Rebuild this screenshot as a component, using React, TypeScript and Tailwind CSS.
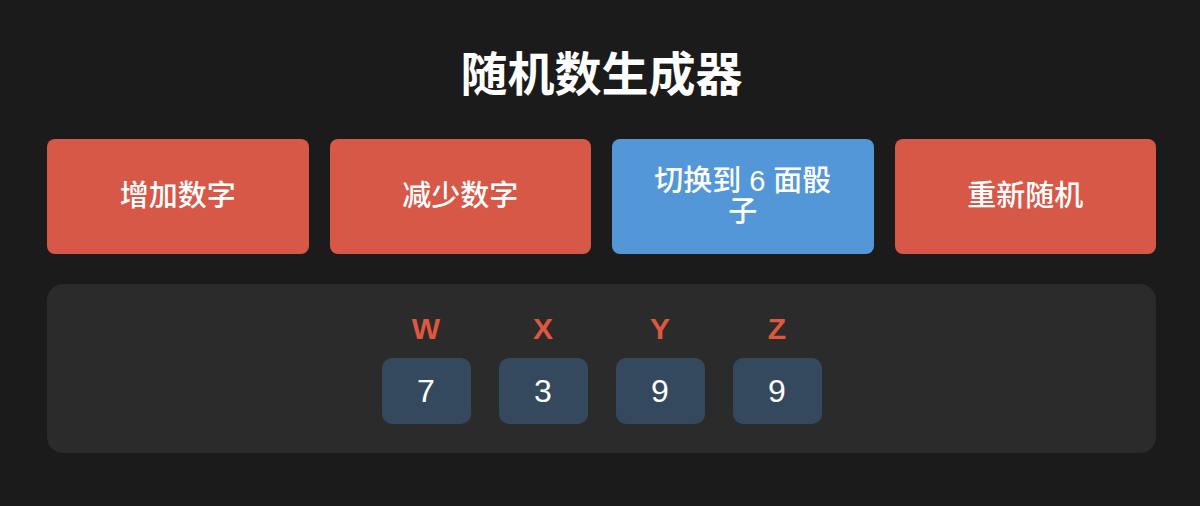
import React, { useState } from "react";

type Mode = 6 | 10;

const LETTERS = ["W", "X", "Y", "Z"];

const rollDigit = (mode: Mode) => Math.floor(Math.random() * mode) + (mode === 6 ? 1 : 0);

const App: React.FC = () => {
  const [mode, setMode] = useState<Mode>(10);
  const [values, setValues] = useState<number[]>([7, 3, 9, 9]);

  const clamp = (n: number) => Math.max(0, Math.min(9, n));

  const increase = () => setValues((v) => v.map((n) => clamp(n + 1)));
  const decrease = () => setValues((v) => v.map((n) => clamp(n - 1)));
  const reroll = () => setValues((v) => v.map(() => rollDigit(mode)));
  const toggleDice = () => setMode((m) => (m === 6 ? 10 : 6));

  const buttons = [
    { label: "增加数字", onClick: increase, color: "bg-[#d85848]" },
    { label: "减少数字", onClick: decrease, color: "bg-[#d85848]" },
    { label: "切换到 6 面骰子", onClick: toggleDice, color: "bg-[#5397d8]" },
    { label: "重新随机", onClick: reroll, color: "bg-[#d85848]" },
  ];

  return (
    <div
      className="min-h-screen bg-[#1b1b1b] pt-[47px] pr-[44px] pb-[53px] pl-[47px] text-white"
      style={{ fontFamily: '"Liberation Sans", "Noto Sans CJK SC", sans-serif' }}
    >
      <h1 className="mb-[36px] text-center text-[47px] leading-[56px] font-bold">
        随机数生成器
      </h1>

      <div className="grid grid-cols-4 gap-[21px]">
        {buttons.map((b) => (
          <button
            key={b.label}
            onClick={b.onClick}
            className={`${b.color} flex h-[115px] items-center justify-center rounded-lg px-[30px] text-center text-[29px] leading-[31px] font-medium text-white`}
          >
            {b.label}
          </button>
        ))}
      </div>

      <div className="mt-[30px] flex justify-center rounded-[16px] bg-[#2b2b2b] pt-[27px] pb-[29px]">
        <div className="flex gap-[28px]">
          {values.map((n, i) => (
            <div key={LETTERS[i]} className="flex w-[89px] flex-col items-center">
              <span className="text-[30px] leading-[36px] font-bold text-[#e0563f]">
                {LETTERS[i]}
              </span>
              <div className="mt-[11px] flex h-[66px] w-[89px] items-center justify-center rounded-[10px] bg-[#34495e] text-[32px]">
                {n}
              </div>
            </div>
          ))}
        </div>
      </div>
    </div>
  );
};

export default App;
